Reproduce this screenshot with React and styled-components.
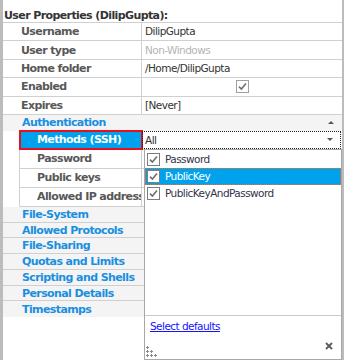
import styled, { createGlobalStyle } from "styled-components";

const GlobalStyle = createGlobalStyle`
  html, body {
    margin: 0;
    padding: 0;
    background: #fff;
  }
  body {
    font-family: "DejaVu Sans", "Liberation Sans", sans-serif;
  }
`;

const LINE = "#d0d0d0";
const SELECT_BLUE = "#00a2ed";
const CAT_BLUE = "#1a8fe0";

const Panel = styled.div`
  position: relative;
  box-sizing: border-box;
  width: 344px;
  height: 360px;
  border-left: 3px solid #bcbcbc;
  border-right: 2px solid #bcbcbc;
  overflow: hidden;
  background: #fff;
`;

const Header = styled.div`
  box-sizing: border-box;
  height: 23px;
  padding: 9px 0 0 1px;
  line-height: 13px;
  border-bottom: 1px solid ${LINE};
  font-size: 11px;
  font-weight: bold;
  letter-spacing: -0.6px;
  color: #333;
  white-space: nowrap;
`;

const PropRow = styled.div`
  display: flex;
  box-sizing: border-box;
  height: ${({ $h }) => $h}px;
  padding-left: ${({ $nested }) => ($nested ? 16 : 0)}px;
`;

const RowBody = styled.div`
  flex: 1;
  display: flex;
  min-width: 0;
  border-bottom: 1px solid ${LINE};
  border-left: ${({ $nested }) => ($nested ? `1px solid ${LINE}` : "none")};
`;

const Label = styled.div`
  box-sizing: border-box;
  flex: none;
  width: ${({ $nested }) => ($nested ? 122 : 139)}px;
  padding-left: ${({ $nested }) => ($nested ? 17 : 18)}px;
  display: flex;
  align-items: center;
  border-right: 1px solid ${LINE};
  font-size: 11px;
  font-weight: bold;
  letter-spacing: -0.6px;
  line-height: 13px;
  color: ${({ $selected }) => ($selected ? "#fff" : "#585858")};
  background: ${({ $selected }) => ($selected ? SELECT_BLUE : "transparent")};
  outline: ${({ $selected }) => ($selected ? "2px solid #e8101c" : "none")};
  outline-offset: -1px;
  white-space: nowrap;
  overflow: hidden;
`;

const Value = styled.div`
  flex: 1;
  min-width: 0;
  display: flex;
  align-items: center;
  justify-content: ${({ $center }) => ($center ? "center" : "flex-start")};
  padding-left: ${({ $center }) => ($center ? 0 : 3)}px;
  font-size: 10.5px;
  letter-spacing: -0.55px;
  line-height: 13px;
  color: ${({ $muted }) => ($muted ? "#b4b4b4" : "#333")};
  white-space: nowrap;
  overflow: hidden;
`;

const ComboCell = styled.div`
  position: relative;
  flex: 1;
  min-width: 0;
`;

const ComboBox = styled.div`
  box-sizing: border-box;
  height: 18px;
  margin-right: 1px;
  padding: 0 7px 0 2px;
  display: flex;
  align-items: center;
  justify-content: space-between;
  border: 1px dotted #222;
  font-size: 10.5px;
  letter-spacing: -0.55px;
  color: #333;
`;

const Caret = styled.span`
  width: 0;
  height: 0;
  border-left: 3px solid transparent;
  border-right: 3px solid transparent;
  ${({ $up }) =>
    $up ? "border-bottom: 3px solid #555;" : "border-top: 3px solid #555;"}
`;

const CategoryRow = styled.div`
  box-sizing: border-box;
  height: ${({ $h }) => $h}px;
  display: flex;
  align-items: center;
  justify-content: space-between;
  padding: 0 8px 0 19px;
  background: #f4f4f4;
  border-bottom: ${({ $last }) => ($last ? "none" : `1px solid ${LINE}`)};
  font-size: 11px;
  font-weight: bold;
  letter-spacing: -0.6px;
  line-height: 13px;
  color: ${CAT_BLUE};
  white-space: nowrap;
`;

const CheckSquare = styled.span`
  box-sizing: border-box;
  flex: none;
  width: 13px;
  height: 13px;
  border: 1px solid ${({ $dark }) => ($dark ? "#7d7d7d" : "#a0a0a0")};
  background: #fff;
  display: flex;
  align-items: center;
  justify-content: center;
`;

const Popup = styled.div`
  position: absolute;
  top: 100%;
  left: 2px;
  z-index: 2;
  box-sizing: border-box;
  width: 198px;
  height: 211px;
  display: flex;
  flex-direction: column;
  background: #fff;
  border: 1px solid #a8a8a8;
`;

const OptionList = styled.div`
  flex: 1;
  padding-top: 1px;
`;

const Option = styled.div`
  box-sizing: border-box;
  height: 17px;
  display: flex;
  align-items: center;
  gap: 5px;
  padding-left: 1px;
  border: 1px dotted ${({ $active }) => ($active ? "#ff6a10" : "transparent")};
  background: ${({ $active }) => ($active ? SELECT_BLUE : "transparent")};
  color: ${({ $active }) => ($active ? "#fff" : "#33334a")};
  font-size: 10.5px;
  letter-spacing: -0.55px;
  white-space: nowrap;
`;

const Footer = styled.div`
  box-sizing: border-box;
  height: 44px;
  display: flex;
  flex-direction: column;
  padding: 3px 0 2px;
  border-top: 1px solid #c8c8c8;
`;

const DefaultsLink = styled.a`
  align-self: flex-start;
  margin-left: 5px;
  line-height: 14px;
  font-size: 10.5px;
  letter-spacing: -0.55px;
  color: #1414ff;
  text-decoration: underline;
  cursor: pointer;
`;

const FooterBar = styled.div`
  margin-top: auto;
  display: flex;
  align-items: flex-end;
  justify-content: space-between;
  padding: 0 8px 0 1px;
`;

const CloseIcon = styled.svg`
  margin-bottom: 7px;
`;

const Check = ({ dark }) => (
  <CheckSquare $dark={dark}>
    <svg width="11" height="11" viewBox="0 0 11 11">
      <path
        d="M2 5.6 L4.4 8 L9 2.6"
        fill="none"
        stroke="#6f6f6f"
        strokeWidth="1.6"
      />
    </svg>
  </CheckSquare>
);

const Grip = () => (
  <svg width="11" height="11" viewBox="0 0 11 11">
    {[
      [1, 1],
      [1, 5],
      [5, 5],
      [1, 9],
      [5, 9],
      [9, 9],
    ].map(([x, y]) => (
      <path
        key={`${x}-${y}`}
        d={`M${x - 1} ${y + 0.5} h3 M${x + 0.5} ${y - 1} v3`}
        stroke="#8a8a8a"
        strokeWidth="1"
      />
    ))}
  </svg>
);

const TOP_ROWS = [
  { label: "Username", value: "DilipGupta" },
  { label: "User type", value: "Non-Windows", muted: true },
  { label: "Home folder", value: "/Home/DilipGupta" },
  { label: "Enabled", check: true },
  { label: "Expires", value: "[Never]" },
];

const AUTH_ROWS = ["Password", "Public keys", "Allowed IP address"];

const CATEGORIES = [
  "File-System",
  "Allowed Protocols",
  "File-Sharing",
  "Quotas and Limits",
  "Scripting and Shells",
  "Personal Details",
  "Timestamps",
];

const OPTIONS = ["Password", "PublicKey", "PublicKeyAndPassword"];

export default function App() {
  return (
    <>
      <GlobalStyle />
      <Panel>
        <Header>User Properties (DilipGupta):</Header>

        {TOP_ROWS.map((row) => (
          <PropRow key={row.label} $h={18.4}>
            <RowBody>
              <Label>{row.label}</Label>
              <Value $muted={row.muted} $center={row.check}>
                {row.check ? <Check /> : row.value}
              </Value>
            </RowBody>
          </PropRow>
        ))}

        <CategoryRow $h={16} $last>
          Authentication
          <Caret $up />
        </CategoryRow>

        <PropRow $h={19} $nested>
          <RowBody $nested>
            <Label $nested $selected>
              Methods (SSH)
            </Label>
            <ComboCell>
              <ComboBox>
                All
                <Caret />
              </ComboBox>
              <Popup>
                <OptionList>
                  {OPTIONS.map((opt) => (
                    <Option key={opt} $active={opt === "PublicKey"}>
                      <Check dark />
                      {opt}
                    </Option>
                  ))}
                </OptionList>
                <Footer>
                  <DefaultsLink>Select defaults</DefaultsLink>
                  <FooterBar>
                    <Grip />
                    <CloseIcon width="8" height="8" viewBox="0 0 8 8">
                      <path
                        d="M1 1 L7 7 M7 1 L1 7"
                        stroke="#5a5a5a"
                        strokeWidth="1.8"
                      />
                    </CloseIcon>
                  </FooterBar>
                </Footer>
              </Popup>
            </ComboCell>
          </RowBody>
        </PropRow>

        {AUTH_ROWS.map((label) => (
          <PropRow key={label} $h={19} $nested>
            <RowBody $nested>
              <Label $nested>{label}</Label>
              <Value />
            </RowBody>
          </PropRow>
        ))}

        {CATEGORIES.map((name, i) => (
          <CategoryRow key={name} $h={15.75} $last={i === CATEGORIES.length - 1}>
            {name}
          </CategoryRow>
        ))}
      </Panel>
    </>
  );
}
